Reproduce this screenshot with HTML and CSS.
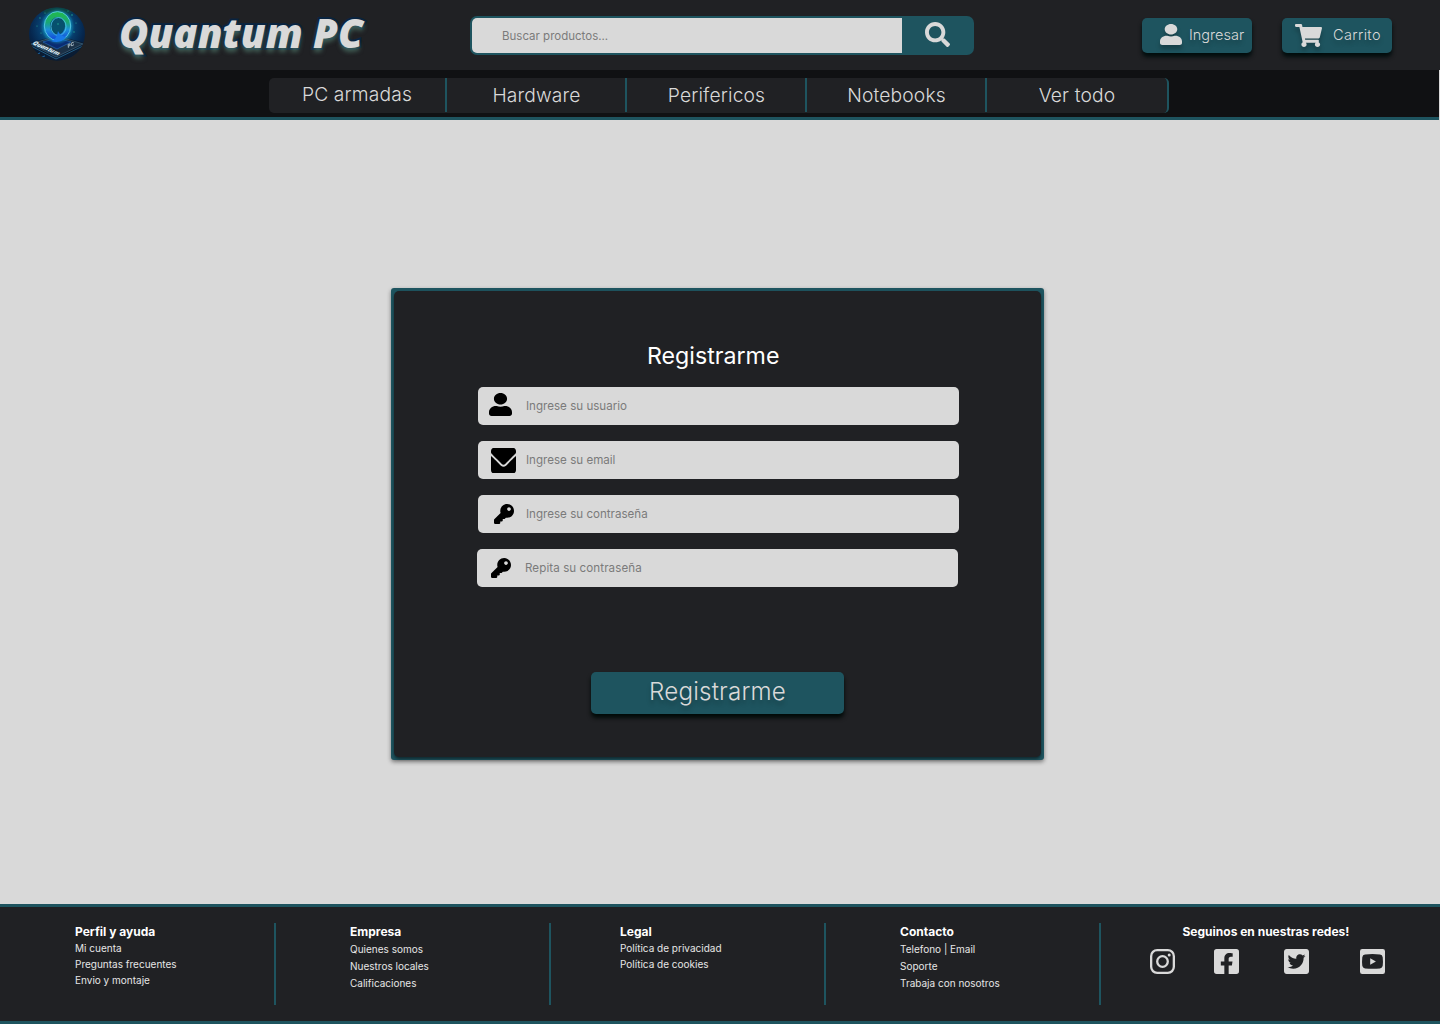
FILE: index.html
```html
<!DOCTYPE html>
<html lang="es">
<head>
<meta charset="utf-8">
<title>Quantum PC - Registrarme</title>
<link rel="stylesheet" href="styles.css">
</head>
<body>
<svg class="sprite" aria-hidden="true">
  <symbol id="user" viewBox="0 0 448 512" preserveAspectRatio="none"><path d="M224 256c70.7 0 128-57.3 128-128S294.7 0 224 0 96 57.3 96 128s57.3 128 128 128zm89.6 32h-16.7c-22.2 10.2-46.9 16-72.9 16s-50.6-5.8-72.9-16h-16.7C60.2 288 0 348.2 0 422.4V464c0 26.5 21.5 48 48 48h352c26.5 0 48-21.5 48-48v-41.6c0-74.2-60.2-134.4-134.4-134.4z"/></symbol>
  <symbol id="key" viewBox="0 0 512 512"><path d="M512 176.001C512 273.203 433.202 352 336 352c-11.22 0-22.19-1.062-32.827-3.069l-24.012 27.014A23.999 23.999 0 0 1 261.223 384H224v40c0 13.255-10.745 24-24 24h-40v40c0 13.255-10.745 24-24 24H24c-13.255 0-24-10.745-24-24v-78.059c0-6.365 2.529-12.47 7.029-16.971l161.802-161.802C163.108 213.814 160 195.271 160 176 160 78.798 238.797.001 335.999 0 433.488-.001 512 78.511 512 176.001zM336 128c0 26.51 21.49 48 48 48s48-21.49 48-48-21.49-48-48-48-48 21.49-48 48z"/></symbol>
</svg>

<header class="header">
  <svg class="logo" width="58" height="56" viewBox="0 0 58 56">
    <defs>
      <radialGradient id="sky" cx=".5" cy=".38" r=".62">
        <stop offset="0" stop-color="#0c6f8e"/><stop offset=".4" stop-color="#084678"/><stop offset=".75" stop-color="#06264d"/><stop offset="1" stop-color="#061b33"/>
      </radialGradient>
      <linearGradient id="ring" x1="0" y1="0" x2="0" y2="1">
        <stop offset="0" stop-color="#20b653"/><stop offset=".35" stop-color="#1aa678"/><stop offset=".65" stop-color="#1d90d8"/><stop offset="1" stop-color="#1456d8"/>
      </linearGradient>
      <clipPath id="disc"><ellipse cx="29" cy="28" rx="28" ry="26.5"/></clipPath>
      <filter id="glow" x="-30%" y="-30%" width="160%" height="160%"><feGaussianBlur stdDeviation="1.6"/></filter>
    </defs>
    <g clip-path="url(#disc)">
      <rect width="58" height="56" fill="url(#sky)"/>
      <path d="M12 0h34l-4 8H17z" fill="#0a4a3a" opacity=".8" filter="url(#glow)"/>
      <path d="M0 37l29-7 29 7v19H0z" fill="#0a1c33"/>
      <path d="M3 38l26-8 26 8-27 13z" fill="#1b3147" stroke="#47708a" stroke-width=".6"/>
      <path d="M3 40l25 13 27-13" fill="none" stroke="#2c79a5" stroke-width=".7"/>
      <path d="M15 36l14-4 14 4-14 7z" fill="#0a2b70" stroke="#2270c4" stroke-width=".6"/>
      <path d="M6 49l6-2m-3 5l8-2m26 2l7-4m-2 7l5-5" stroke="#1c6aa8" stroke-width="1"/>
      <ellipse cx="29.5" cy="20.5" rx="13" ry="14" fill="none" stroke="#16a5cf" stroke-width="4" opacity=".7" filter="url(#glow)"/>
      <ellipse cx="29.5" cy="20" rx="10.4" ry="11.6" fill="#07506e" stroke="url(#ring)" stroke-width="5.6"/>
      <ellipse cx="29.5" cy="20" rx="13.2" ry="14.4" fill="none" stroke="#59cbe8" stroke-width=".9"/>
      <ellipse cx="30.5" cy="20.5" rx="7.6" ry="9" fill="none" stroke="#49bfe8" stroke-width=".9"/>
      <path d="M30 25q2 5 8 6-5 7-15 4 6-2 7-10" fill="#1979e6"/>
      <g fill="#22a391"><circle cx="12" cy="12" r=".7"/><circle cx="17" cy="7" r=".6"/><circle cx="44" cy="9" r=".8"/><circle cx="48" cy="17" r=".6"/><circle cx="9" cy="20" r=".6"/><circle cx="40" cy="5" r=".6"/><circle cx="13" cy="27" r=".6"/><circle cx="46" cy="26" r=".7"/><circle cx="30" cy="18" r=".8"/></g>
      <text class="chip-text" transform="translate(4 38) rotate(24) skewX(-20)">Quantum</text>
      <text class="chip-text small" transform="translate(40 42) rotate(-24) skewX(-10)">PC</text>
    </g>
  </svg>
  <div class="brand">Quantum PC</div>
  <form class="search">
    <input class="search-input" type="text" placeholder="Buscar productos...">
    <button class="search-button" type="button" aria-label="Buscar"><svg width="25" height="25" viewBox="0 0 512 512"><path d="M505 442.7L405.3 343c-4.5-4.5-10.6-7-17-7H372c27.6-35.3 44-79.7 44-128C416 93.1 322.9 0 208 0S0 93.1 0 208s93.1 208 208 208c48.3 0 92.7-16.4 128-44v16.3c0 6.4 2.5 12.5 7 17l99.7 99.7c9.4 9.4 24.6 9.4 33.9 0l28.3-28.3c9.4-9.4 9.4-24.6.1-34zM208 336c-70.7 0-128-57.2-128-128 0-70.7 57.2-128 128-128 70.7 0 128 57.2 128 128 0 70.7-57.2 128-128 128z"/></svg></button>
  </form>
  <div class="actions">
    <a class="action login"><svg width="22" height="21"><use href="#user"/></svg><span>Ingresar</span></a>
    <a class="action cart"><svg width="27" height="23" viewBox="0 0 576 512" preserveAspectRatio="none"><path d="M528.12 301.319l47.273-208C578.806 78.301 567.391 64 551.99 64H159.208l-9.166-44.81C147.758 8.021 137.93 0 126.529 0H24C10.745 0 0 10.745 0 24v16c0 13.255 10.745 24 24 24h69.883l70.248 343.435C147.325 417.1 136 435.222 136 456c0 30.928 25.072 56 56 56s56-25.072 56-56c0-15.674-6.447-29.835-16.824-40h209.647C430.447 426.165 424 440.326 424 456c0 30.928 25.072 56 56 56s56-25.072 56-56c0-22.172-12.888-41.332-31.579-50.405l5.517-24.276c3.413-15.018-8.002-29.319-23.403-29.319H218.117l-6.545-32h293.145c11.206 0 20.92-7.754 23.403-18.681z"/></svg><span>Carrito</span></a>
  </div>
</header>

<nav class="nav">
  <ul class="menu">
    <li class="menu-item first">PC armadas</li>
    <li class="menu-item">Hardware</li>
    <li class="menu-item">Perifericos</li>
    <li class="menu-item">Notebooks</li>
    <li class="menu-item last">Ver todo</li>
  </ul>
</nav>

<main class="main">
  <section class="card">
    <form class="panel">
      <h1 class="title">Registrarme</h1>
      <div class="fields">
        <label class="field user"><svg width="23" height="23"><use href="#user"/></svg><input type="text" placeholder="Ingrese su usuario"></label>
        <label class="field email"><svg width="25" height="25" viewBox="0 64 512 384" preserveAspectRatio="none"><path d="M502.3 190.8c3.9-3.1 9.7-.2 9.7 4.7V400c0 26.5-21.5 48-48 48H48c-26.5 0-48-21.5-48-48V195.6c0-5 5.7-7.8 9.7-4.7 22.4 17.4 52.1 39.5 154.1 113.6 21.1 15.4 56.7 47.8 92.2 47.6 35.7.3 72-32.8 92.3-47.6 102-74.1 131.6-96.3 154-113.7zM256 320c23.2.4 56.6-29.2 73.4-41.4 132.7-96.3 142.8-104.7 173.4-128.7 5.8-4.5 9.2-11.5 9.2-18.9v-19c0-26.5-21.5-48-48-48H48c-26.5 0-48 21.5-48 48v19c0 7.4 3.4 14.3 9.2 18.9 30.6 23.9 40.7 32.4 173.4 128.7 16.8 12.2 50.2 41.8 73.4 41.4z"/></svg><input type="text" placeholder="Ingrese su email"></label>
        <label class="field password"><svg width="20" height="20"><use href="#key"/></svg><input type="text" placeholder="Ingrese su contraseña"></label>
        <label class="field repeat"><svg width="20" height="20"><use href="#key"/></svg><input type="text" placeholder="Repita su contraseña"></label>
      </div>
      <button class="submit" type="button">Registrarme</button>
    </form>
  </section>
</main>

<footer class="footer">
  <div class="column">
    <h2>Perfil y ayuda</h2>
    <ul class="links"><li>Mi cuenta</li><li>Preguntas frecuentes</li><li>Envio y montaje</li></ul>
  </div>
  <div class="column">
    <h2>Empresa</h2>
    <ul class="links loose"><li>Quienes somos</li><li>Nuestros locales</li><li>Calificaciones</li></ul>
  </div>
  <div class="column legal">
    <h2>Legal</h2>
    <ul class="links"><li>Política de privacidad</li><li>Política de cookies</li></ul>
  </div>
  <div class="column">
    <h2>Contacto</h2>
    <ul class="links loose"><li>Telefono | Email</li><li>Soporte</li><li>Trabaja con nosotros</li></ul>
  </div>
  <div class="social">
    <h2>Seguinos en nuestras redes!</h2>
    <div class="networks">
      <svg class="instagram" width="25" height="25" viewBox="0 0 25 25"><rect x="1.15" y="1.15" width="22.7" height="22.7" rx="6" fill="none" stroke="#d9d9d9" stroke-width="2.3"/><circle cx="12.5" cy="12.5" r="5.3" fill="none" stroke="#d9d9d9" stroke-width="2.3"/><circle cx="19.2" cy="5.9" r="1.5"/></svg>
      <svg class="facebook" width="25" height="25" viewBox="0 32 448 448"><path d="M400 32H48A48 48 0 0 0 0 80v352a48 48 0 0 0 48 48h137.25V327.69h-63V256h63v-54.64c0-62.15 37-96.48 93.67-96.48 27.14 0 55.52 4.84 55.52 4.84v61h-31.27c-30.81 0-40.42 19.12-40.42 38.73V256h68.78l-11 71.69h-57.78V480H400a48 48 0 0 0 48-48V80a48 48 0 0 0-48-48z"/></svg>
      <svg class="twitter" width="25" height="25" viewBox="0 32 448 448"><path d="M400 32H48C21.5 32 0 53.5 0 80v352c0 26.5 21.5 48 48 48h352c26.5 0 48-21.5 48-48V80c0-26.5-21.5-48-48-48zm-48.9 158.8c.2 2.8.2 5.7.2 8.5 0 86.7-66 186.6-186.6 186.6-37.2 0-71.7-10.8-100.7-29.4 5.3.6 10.4.8 15.8.8 30.7 0 58.9-10.4 81.4-28-28.8-.6-53-19.5-61.3-45.5 10.1 1.5 19.2 1.5 29.6-1.2-30-6.1-52.5-32.5-52.5-64.4v-.8c8.7 4.9 18.9 7.9 29.6 8.3a65.447 65.447 0 0 1-29.2-54.6c0-12.2 3.2-23.4 8.9-33.1 32.3 39.8 80.8 65.8 135.2 68.6-9.3-44.5 24-80.6 64-80.6 18.9 0 35.9 7.9 47.9 20.7 14.8-2.8 29-8.3 41.6-15.8-4.9 15.2-15.2 28-28.8 36.1 13.2-1.4 26-5.1 37.8-10.2-8.9 13.1-20.1 24.7-32.9 34z"/></svg>
      <svg class="youtube" width="25" height="25" viewBox="0 0 25 25"><path fill-rule="evenodd" d="M2.2 0h20.6A2.2 2.2 0 0 1 25 2.2v20.6a2.2 2.2 0 0 1-2.2 2.2H2.2A2.2 2.2 0 0 1 0 22.800V2.200A2.200 2.200 0 0 1 2.200 0zM5 5.400Q2.600 5.700 2.300 8.200q-.5 4.300 0 8.600.3 2.300 2.700 2.600 7.500.7 15 0 2.400-.3 2.700-2.600.5-4.300 0-8.600Q22.400 5.700 20 5.400q-7.500-.7-15 0zm5.200 3.900l5.700 3.200-5.700 3.200z"/></svg>
    </div>
  </div>
</footer>
</body>
</html>
```
FILE: styles.css
```css
* { box-sizing: border-box; }

body {
  margin: 0;
  width: 1440px;
  height: 1024px;
  display: flex;
  flex-direction: column;
  overflow: hidden;
  background: #d9d9d9;
  color: #d9d9d9;
  font-family: Inter, "Liberation Sans", sans-serif;
}

h1, h2, ul { margin: 0; padding: 0; }
ul { list-style: none; }
svg { display: block; flex: none; fill: currentColor; }
button, input { font-family: inherit; border: 0; padding: 0; background: none; }
.sprite { display: none; }

.header {
  height: 70px;
  flex: none;
  display: flex;
  align-items: flex-start;
  background: #202124;
}

.logo { margin: 6px 0 0 28px; }
.chip-text { font: italic 900 6px Inter, sans-serif; fill: #d5e6ee; }
.small { font-size: 5px; opacity: .7; }

.brand {
  width: 351px;
  margin: 6px 0 0 33px;
  font: italic 900 40px/54px "Noto Sans", sans-serif;
  white-space: nowrap;
  -webkit-text-stroke: 4px #0a2440;
  paint-order: stroke fill;
  text-shadow: 0 4px 4px rgba(75, 112, 100, .75);
}

.search {
  display: flex;
  width: 504px;
  height: 39px;
  margin-top: 16px;
  padding: 2px;
  border-radius: 7px;
  background: #1e545f;
}

.search-input {
  width: 430px;
  height: 35px;
  padding: 0 30px;
  border-radius: 5px 0 0 5px;
  background: #d9d9d9;
  font-size: 11.5px;
}

::placeholder { color: #7b7b7b; opacity: 1; }

.search-button { padding: 4px 0 0 23px; display: flex; color: #d9d9d9; }

.actions { display: flex; gap: 30px; margin: 18px 0 0 168px; }

.action {
  width: 110px;
  height: 35px;
  display: flex;
  align-items: flex-start;
  border-radius: 5px;
  background: #1e545f;
  box-shadow: 0 4px 4px #000d0d;
  font-size: 14.5px;
  font-weight: 330;
  line-height: 34px;
  text-shadow: 0 4px 4px rgba(0, 0, 0, .25);
}
.action svg { filter: drop-shadow(0 4px 2px rgba(0, 0, 0, .25)); }
.login svg { margin: 6px 7px 0 18px; }
.cart svg { margin: 6px 11px 0 13px; }
.cart span { letter-spacing: .35px; }

.nav {
  width: 1439px;
  height: 50px;
  flex: none;
  padding: 8px 0 0 269px;
  border-bottom: 3px solid #1e545f;
  background: #101113;
}

.menu {
  width: 900px;
  height: 35px;
  display: grid;
  grid-template-columns: 178px repeat(3, 180px) 182px;
  border-radius: 5px;
  background: #202124;
}

.menu-item {
  height: 34px;
  padding-left: 1px;
  border-right: 2px solid #1e545f;
  font-size: 19.25px;
  font-weight: 340;
  line-height: 34px;
  letter-spacing: .15px;
  text-align: center;
}
.first { padding-left: 0; line-height: 33px; }
.last { height: 35px; padding-left: 0; border-radius: 0 5px 5px 0; }

.main { flex: 1; padding: 168px 0 0 391px; }

.card {
  width: 653px;
  height: 472px;
  padding: 3px;
  border-radius: 3px;
  background: #1e545f;
  box-shadow: 0 2px 4px rgba(0, 0, 0, .45);
}

.panel {
  height: 466px;
  display: flex;
  flex-direction: column;
  border-radius: 5px;
  background: #202124;
  box-shadow: 0 2px 3px rgba(0, 0, 0, .5);
}

.title {
  margin: 50px 0 0 253px;
  color: #fff;
  font-size: 23.2px;
  font-weight: 400;
  line-height: 30px;
}

.fields { display: grid; gap: 16px; margin: 16px 0 0 84px; }

.field {
  width: 481px;
  height: 38px;
  display: grid;
  grid-template-columns: 48px 1fr;
  border-radius: 5px;
  background: #d9d9d9;
  color: #000;
}
.field input { font-size: 11.6px; height: 38px; }
.user svg { margin: 6px 0 0 11px; }
.email svg { margin: 7px 0 0 13px; }
.password svg { margin: 9px 0 0 16px; }
.repeat svg { margin: 9px 0 0 14px; }
.repeat { margin-left: -1px; }
.field.repeat input { letter-spacing: .08px; }

.submit {
  width: 253px;
  height: 42px;
  margin: 85px 0 0 197px;
  padding-bottom: 3px;
  border-radius: 5px;
  background: #1e545f;
  box-shadow: 0 4px 4px #000a08;
  color: #d9d9d9;
  font-size: 24.2px;
  font-weight: 330;
  letter-spacing: .18px;
  text-shadow: 0 4px 4px rgba(0, 0, 0, .25);
}

.footer {
  height: 120px;
  flex: none;
  display: grid;
  grid-template-columns: 276px repeat(3, 275px) 1fr;
  align-items: start;
  padding-top: 16px;
  border-top: 3px solid #1e545f;
  border-bottom: 3px solid #1e545f;
  background: #202124;
}

.footer h2 { color: #fff; font-size: 12px; font-weight: 700; line-height: 18px; }
.column { height: 82px; padding-left: 74px; border-right: 2px solid #1e545f; }
.column:first-child { padding-left: 75px; }
.footer .legal { padding-left: 69px; }
.column h2 { height: 17px; }
.links { font-size: 10px; line-height: 16px; color: #e6e6e6; }
.loose { padding-top: 1px; line-height: 17px; }

.social h2 { padding-left: 81.5px; }
.networks { display: flex; padding: 8px 0 0 49px; }
.facebook { margin-left: 39px; }
.twitter { margin-left: 45px; }
.youtube { margin-left: 51px; }
```
